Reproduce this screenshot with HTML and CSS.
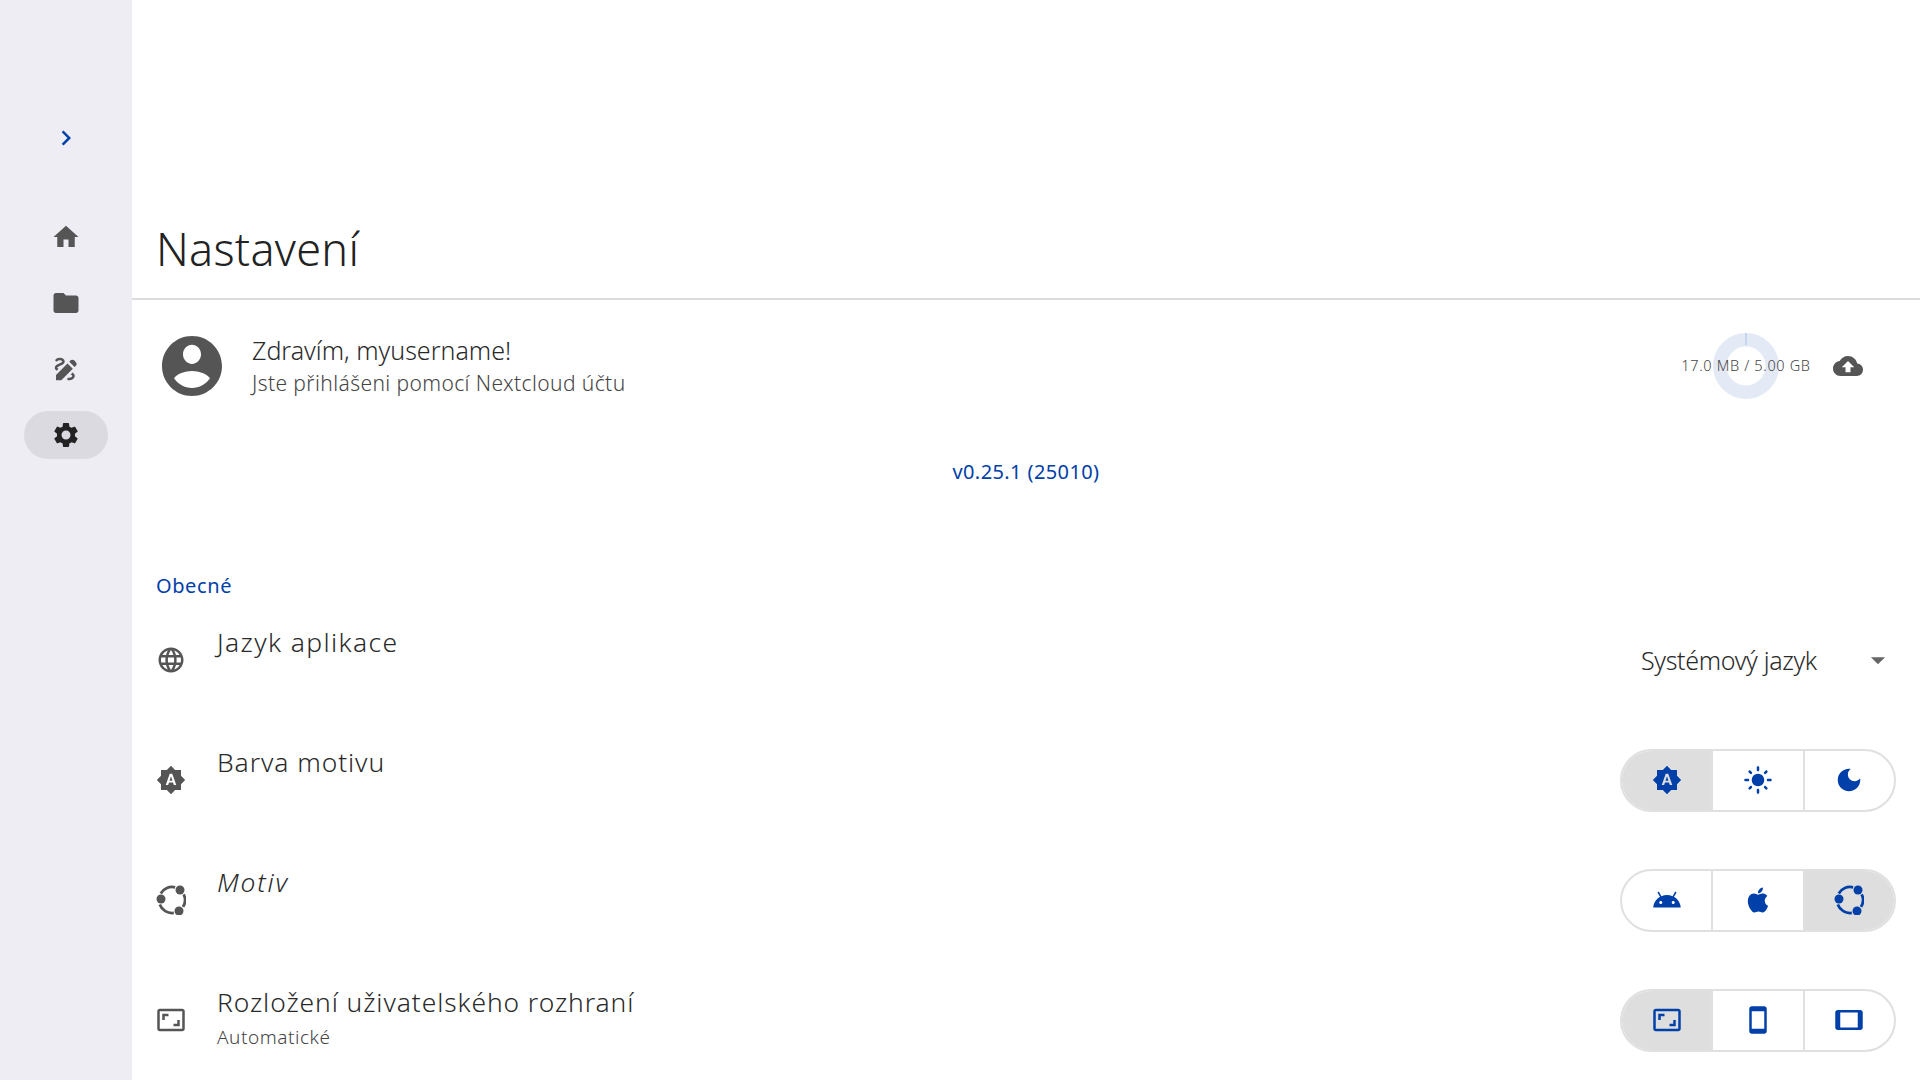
FILE: index.html
```html
<!DOCTYPE html>
<html lang="cs">
<head>
<meta charset="utf-8">
<title>Nastavení</title>
<link rel="stylesheet" href="styles.css">
</head>
<body>
<svg class="defs" aria-hidden="true">
  <symbol id="i-chevron" viewBox="0 0 24 24"><path d="M10 6L8.59 7.41 13.17 12l-4.58 4.59L10 18l6-6z"/></symbol>
  <symbol id="i-home" viewBox="0 0 24 24"><path d="M10 20v-6h4v6h5v-8h3L12 3 2 12h3v8z"/></symbol>
  <symbol id="i-folder" viewBox="0 0 24 24"><path d="M10 4H4c-1.1 0-1.99.9-1.99 2L2 18c0 1.1.9 2 2 2h16c1.1 0 2-.9 2-2V8c0-1.1-.9-2-2-2h-8l-2-2z"/></symbol>
  <symbol id="i-draw" viewBox="0 0 24 24"><path d="M18.85 10.39l1.06-1.06c.78-.78.78-2.05 0-2.83L18.5 5.09c-.78-.78-2.05-.78-2.83 0l-1.06 1.06 4.24 4.24zm-5.66-2.83L4 16.76V21h4.24l9.19-9.19-4.24-4.25zM19 17.5c0 2.19-2.54 3.5-5 3.5-.55 0-1-.45-1-1s.45-1 1-1c1.54 0 3-.73 3-1.5 0-.47-.48-.87-1.23-1.2l1.48-1.48c1.07.63 1.75 1.47 1.75 2.68zM4.58 13.35C3.61 12.79 3 12.06 3 11c0-1.8 1.89-2.63 3.56-3.36C7.59 7.18 9 6.56 9 6c0-.41-.78-1-2-1-1.26 0-1.8.61-1.83.64-.35.41-.98.46-1.4.12-.41-.34-.49-.95-.15-1.38C3.73 4.24 4.76 3 7 3s4 1.32 4 3c0 1.87-1.93 2.72-3.64 3.47C6.42 9.88 5 10.5 5 11c0 .31.43.6 1.07.86l-1.49 1.49z"/></symbol>
  <symbol id="i-settings" viewBox="0 0 24 24"><path d="M19.14 12.94c.04-.3.06-.61.06-.94 0-.32-.02-.64-.07-.94l2.03-1.58c.18-.14.23-.41.12-.61l-1.92-3.32c-.12-.22-.37-.29-.59-.22l-2.39.96c-.5-.38-1.03-.7-1.62-.94l-.36-2.54c-.04-.24-.24-.41-.48-.41h-3.84c-.24 0-.43.17-.47.41l-.36 2.54c-.59.24-1.13.57-1.62.94l-2.39-.96c-.22-.08-.47 0-.59.22L2.74 8.87c-.12.21-.08.47.12.61l2.03 1.58c-.05.3-.09.63-.09.94s.02.64.07.94l-2.03 1.58c-.18.14-.23.41-.12.61l1.92 3.32c.12.22.37.29.59.22l2.39-.96c.5.38 1.03.7 1.62.94l.36 2.54c.05.24.24.41.48.41h3.84c.24 0 .44-.17.47-.41l.36-2.54c.59-.24 1.13-.56 1.62-.94l2.39.96c.22.08.47 0 .59-.22l1.92-3.32c.12-.22.07-.47-.12-.61l-2.01-1.58zM12 15.6c-1.98 0-3.6-1.62-3.6-3.6s1.62-3.6 3.6-3.6 3.6 1.62 3.6 3.6-1.62 3.6-3.6 3.6z"/></symbol>
  <symbol id="i-account" viewBox="0 0 24 24"><path d="M12 2C6.48 2 2 6.48 2 12s4.48 10 10 10 10-4.48 10-10S17.52 2 12 2zm0 2.9c1.66 0 3 1.44 3 3.2s-1.34 3.2-3 3.2-3-1.44-3-3.2 1.34-3.2 3-3.2zm0 14.4c-2.5 0-4.71-1.28-6-3.22 1-1.4 3.6-2.38 6-2.38s5 .98 6 2.38c-1.29 1.94-3.5 3.22-6 3.22z"/></symbol>
  <symbol id="i-cloud" viewBox="0 0 24 24"><path d="M19.35 10.04C18.67 6.59 15.64 4 12 4 9.11 4 6.6 5.64 5.35 8.04 2.34 8.36 0 10.91 0 14c0 3.31 2.69 6 6 6h13c2.76 0 5-2.24 5-5 0-2.64-2.05-4.78-4.65-4.96zM14 13v4h-4v-4H7l5-5 5 5h-3z"/></symbol>
  <symbol id="i-language" viewBox="0 0 24 24"><path d="M11.99 2C6.47 2 2 6.48 2 12s4.47 10 9.99 10C17.52 22 22 17.52 22 12S17.52 2 11.99 2zm6.93 6h-2.95c-.32-1.25-.78-2.45-1.38-3.56 1.84.63 3.37 1.91 4.33 3.56zM12 4.04c.83 1.2 1.48 2.53 1.91 3.96h-3.82c.43-1.43 1.08-2.76 1.91-3.96zM4.26 14C4.1 13.36 4 12.69 4 12s.1-1.36.26-2h3.38c-.08.66-.14 1.32-.14 2 0 .68.06 1.34.14 2H4.26zm.82 2h2.95c.32 1.25.78 2.45 1.38 3.56-1.84-.63-3.37-1.9-4.33-3.56zm2.95-8H5.08c.96-1.66 2.49-2.93 4.33-3.56C8.81 5.55 8.35 6.75 8.03 8zM12 19.96c-.83-1.2-1.48-2.53-1.91-3.96h3.82c-.43 1.43-1.08 2.76-1.91 3.96zM14.34 14H9.66c-.09-.66-.16-1.32-.16-2 0-.68.07-1.35.16-2h4.68c.09.65.16 1.32.16 2 0 .68-.07 1.34-.16 2zm.25 5.56c.6-1.11 1.06-2.31 1.38-3.56h2.95c-.96 1.65-2.49 2.93-4.33 3.56zM16.36 14c.08-.66.14-1.32.14-2 0-.68-.06-1.34-.14-2h3.38c.16.64.26 1.31.26 2s-.1 1.36-.26 2h-3.38z"/></symbol>
  <symbol id="i-auto" viewBox="0 0 24 24"><path d="M10.85 12.65h2.3L12 9l-1.15 3.65zM20 8.69V4h-4.69L12 .69 8.69 4H4v4.69L.69 12 4 15.31V20h4.69L12 23.31 15.31 20H20v-4.69L23.31 12 20 8.69zM14.3 16l-.7-2h-3.2l-.7 2H7.8L11 7h2l3.2 9h-1.9z"/></symbol>
  <symbol id="i-sun" viewBox="0 0 24 24"><path d="M12 7c-2.76 0-5 2.24-5 5s2.24 5 5 5 5-2.24 5-5-2.24-5-5-5zM2 13h2c.55 0 1-.45 1-1s-.45-1-1-1H2c-.55 0-1 .45-1 1s.45 1 1 1zm18 0h2c.55 0 1-.45 1-1s-.45-1-1-1h-2c-.55 0-1 .45-1 1s.45 1 1 1zM11 2v2c0 .55.45 1 1 1s1-.45 1-1V2c0-.55-.45-1-1-1s-1 .45-1 1zm0 18v2c0 .55.45 1 1 1s1-.45 1-1v-2c0-.55-.45-1-1-1s-1 .45-1 1zM5.99 4.58c-.39-.39-1.03-.39-1.41 0-.39.39-.39 1.03 0 1.41l1.06 1.06c.39.39 1.03.39 1.41 0s.39-1.03 0-1.41L5.99 4.58zm12.37 12.37c-.39-.39-1.03-.39-1.41 0-.39.39-.39 1.03 0 1.41l1.06 1.06c.39.39 1.03.39 1.41 0 .39-.39.39-1.03 0-1.41l-1.06-1.06zm1.06-10.96c.39-.39.39-1.03 0-1.41-.39-.39-1.03-.39-1.41 0l-1.06 1.06c-.39.39-.39 1.03 0 1.41s1.03.39 1.41 0l1.06-1.06zM7.05 18.36c.39-.39.39-1.03 0-1.41-.39-.39-1.03-.39-1.41 0l-1.06 1.06c-.39.39-.39 1.03 0 1.41s1.03.39 1.41 0l1.06-1.06z"/></symbol>
  <symbol id="i-moon" viewBox="0 0 24 24"><path d="M12 3c-4.97 0-9 4.03-9 9s4.03 9 9 9 9-4.03 9-9c0-.46-.04-.92-.1-1.36-.98 1.37-2.58 2.26-4.4 2.26-2.98 0-5.4-2.42-5.4-5.4 0-1.81.89-3.42 2.26-4.4-.44-.06-.9-.1-1.36-.1z"/></symbol>
  <symbol id="i-android" viewBox="0 0 24 24"><path d="M17.6 9.48l1.84-3.18c.16-.31.04-.69-.26-.85-.29-.15-.65-.06-.83.22l-1.88 3.24c-2.86-1.21-6.08-1.21-8.94 0L5.65 5.67c-.19-.29-.58-.38-.87-.2-.28.18-.37.54-.22.83L6.4 9.48C3.3 11.25 1.28 14.44 1 18h22c-.28-3.56-2.3-6.75-5.4-8.52zM7 15.25c-.69 0-1.25-.56-1.25-1.25s.56-1.25 1.25-1.25 1.25.56 1.25 1.25-.56 1.25-1.25 1.25zm10 0c-.69 0-1.25-.56-1.25-1.25s.56-1.25 1.25-1.25 1.25.56 1.25 1.25-.56 1.25-1.25 1.25z"/></symbol>
  <symbol id="i-apple" viewBox="0 0 24 24"><path d="M18.71 19.5c-.83 1.24-1.71 2.45-3.05 2.47-1.34.03-1.77-.79-3.29-.79-1.53 0-2 .77-3.27.82-1.31.05-2.3-1.32-3.14-2.53C4.25 17 2.94 12.45 4.7 9.39c.87-1.52 2.43-2.48 4.12-2.51 1.28-.02 2.5.87 3.29.87.78 0 2.26-1.07 3.81-.91.65.03 2.47.26 3.64 1.98-.09.06-2.17 1.28-2.15 3.81.03 3.02 2.65 4.03 2.68 4.04-.03.07-.42 1.44-1.38 2.83M13 3.5c.73-.83 1.94-1.46 2.94-1.5.13 1.17-.34 2.35-1.04 3.19-.69.85-1.83 1.51-2.95 1.42-.15-1.15.41-2.35 1.05-3.11z"/></symbol>
  <symbol id="i-ubuntu" viewBox="-0.8 0 24 24"><circle cx="18.4" cy="4" r="3.6"/><circle cx="3.2" cy="11.2" r="3.6"/><circle cx="17.6" cy="20.8" r="3.6"/><path class="arc" d="M21.35 7.44A10.4 10.4 0 0 1 20.82 17.51M13.45 22.3A10.4 10.4 0 0 1 2.23 15.56M3 6.8A10.4 10.4 0 0 1 14.5 1.9"/></symbol>
  <symbol id="i-aspect" viewBox="0 0 24 24"><path d="M19 12h-2v3h-3v2h5v-5zM7 9h3V7H5v5h2V9zm14-6H3c-1.1 0-2 .9-2 2v14c0 1.1.9 2 2 2h18c1.1 0 2-.9 2-2V5c0-1.1-.9-2-2-2zm0 16.01H3V4.99h18v14.02z"/></symbol>
  <symbol id="i-phone" viewBox="0 0 24 24"><path d="M17 1.01L7 1c-1.1 0-2 .9-2 2v18c0 1.1.9 2 2 2h10c1.1 0 2-.9 2-2V3c0-1.1-.9-1.99-2-1.99zM17 19H7V5h10v14z"/></symbol>
  <symbol id="i-tablet" viewBox="0 0 24 24"><path d="M21 4H3c-1.1 0-2 .9-2 2v12c0 1.1.9 2 2 2h18c1.1 0 1.99-.9 1.99-2L23 6c0-1.1-.9-2-2-2zm-2 14H5V6h14v12z"/></symbol>
  <symbol id="i-drop" viewBox="0 0 24 24"><path d="M7 10l5 5 5-5z"/></symbol>
</svg>

<div class="app">
  <nav class="rail">
    <button class="rail-toggle"><svg class="icon accent"><use href="#i-chevron"/></svg></button>
    <ul class="rail-list">
      <li class="rail-item"><svg class="icon"><use href="#i-home"/></svg></li>
      <li class="rail-item"><svg class="icon"><use href="#i-folder"/></svg></li>
      <li class="rail-item"><svg class="icon"><use href="#i-draw"/></svg></li>
      <li class="rail-item is-active"><svg class="icon"><use href="#i-settings"/></svg></li>
    </ul>
  </nav>

  <main class="main">
    <header class="topbar"><h1 class="page-title">Nastavení</h1></header>

    <section class="account">
      <svg class="avatar"><use href="#i-account"/></svg>
      <div class="account-text">
        <div class="account-name">Zdravím, myusername!</div>
        <div class="account-sub">Jste přihlášeni pomocí Nextcloud účtu</div>
      </div>
      <div class="storage">
        <div class="storage-meter">
          <svg class="donut" viewBox="0 0 66 66">
            <circle class="donut-track" cx="33" cy="33" r="26.25"/>
            <line class="donut-value" x1="33" y1="0" x2="33" y2="12"/>
          </svg>
          <span class="storage-label">17.0 MB / 5.00 GB</span>
        </div>
        <svg class="icon"><use href="#i-cloud"/></svg>
      </div>
    </section>

    <div class="version">v0.25.1 (25010)</div>

    <h2 class="section-title">Obecné</h2>

    <section class="row">
      <svg class="icon"><use href="#i-language"/></svg>
      <div class="row-text"><div class="row-title is-wide">Jazyk aplikace</div></div>
      <div class="select"><span class="select-value">Systémový jazyk</span><svg class="select-arrow"><use href="#i-drop"/></svg></div>
    </section>

    <section class="row">
      <svg class="icon"><use href="#i-auto"/></svg>
      <div class="row-text"><div class="row-title">Barva motivu</div></div>
      <div class="segments">
        <div class="segment is-on"><svg class="icon accent"><use href="#i-auto"/></svg></div>
        <div class="segment"><svg class="icon accent"><use href="#i-sun"/></svg></div>
        <div class="segment"><svg class="icon accent"><use href="#i-moon"/></svg></div>
      </div>
    </section>

    <section class="row">
      <svg class="icon"><use href="#i-ubuntu"/></svg>
      <div class="row-text"><div class="row-title is-italic">Motiv</div></div>
      <div class="segments">
        <div class="segment"><svg class="icon accent"><use href="#i-android"/></svg></div>
        <div class="segment"><svg class="icon accent"><use href="#i-apple"/></svg></div>
        <div class="segment is-on"><svg class="icon accent"><use href="#i-ubuntu"/></svg></div>
      </div>
    </section>

    <section class="row">
      <svg class="icon"><use href="#i-aspect"/></svg>
      <div class="row-text">
        <div class="row-title">Rozložení uživatelského rozhraní</div>
        <div class="row-sub">Automatické</div>
      </div>
      <div class="segments">
        <div class="segment is-on"><svg class="icon accent"><use href="#i-aspect"/></svg></div>
        <div class="segment"><svg class="icon accent"><use href="#i-phone"/></svg></div>
        <div class="segment"><svg class="icon accent"><use href="#i-tablet"/></svg></div>
      </div>
    </section>
  </main>
</div>
</body>
</html>
```

FILE: styles.css
```css
* { box-sizing: border-box; }

html, body {
  margin: 0;
  height: 100%;
  overflow: hidden;
  background: #fff;
  color: #2a2a2a;
  font-family: "Noto Sans", "Open Sans", sans-serif;
  font-weight: 300;
}

.defs { display: none; }

.app {
  display: flex;
  width: 1920px;
  height: 1080px;
}

.icon {
  display: block;
  flex: none;
  width: 30px;
  height: 30px;
  color: #555;
  fill: #555;
  overflow: visible;
}
.icon.accent { color: #0040a8; fill: #0040a8; }
.arc { fill: none; stroke: currentColor; stroke-width: 2.2; }

/* navigation rail */
.rail {
  flex: none;
  width: 132px;
  padding-top: 114px;
  background: #eeedf4;
  display: flex;
  flex-direction: column;
  align-items: center;
}
.rail-toggle {
  width: 48px;
  height: 48px;
  padding: 0;
  border: 0;
  background: none;
  display: flex;
  align-items: center;
  justify-content: center;
}
.rail-list {
  list-style: none;
  margin: 51px 0 0;
  padding: 0;
  display: flex;
  flex-direction: column;
  gap: 18px;
}
.rail-item {
  width: 84px;
  height: 48px;
  border-radius: 24px;
  display: flex;
  align-items: center;
  justify-content: center;
}
.rail-item.is-active { background: #dbdae0; }
.rail-item.is-active .icon { fill: #222; }

/* main column */
.main {
  flex: 1;
  min-width: 0;
  display: flex;
  flex-direction: column;
}
.topbar {
  height: 300px;
  padding: 0 24px 10px;
  border-bottom: 2px solid #dcdcdc;
  display: flex;
  align-items: flex-end;
}
.page-title {
  margin: 0;
  font-size: 45px;
  line-height: 78px;
  font-weight: 300;
  letter-spacing: .27px;
  color: #222;
}

/* account */
.account {
  height: 132px;
  padding: 0 57px 0 24px;
  display: flex;
  align-items: center;
  gap: 24px;
}
.avatar {
  flex: none;
  width: 72px;
  height: 72px;
  fill: #555;
}
.account-text { flex: 1; }
.account-name {
  font-size: 25px;
  line-height: 34px;
}
.account-sub {
  font-size: 21px;
  line-height: 32px;
  letter-spacing: .4px;
  color: #444;
}
.storage {
  display: flex;
  align-items: center;
  gap: 22px;
}
.storage-meter {
  position: relative;
  width: 130px;
  height: 66px;
  display: flex;
  align-items: center;
  justify-content: center;
}
.donut {
  position: absolute;
  top: 0;
  left: 32px;
  width: 66px;
  height: 66px;
}
.donut-track { fill: none; stroke: #e3eaf6; stroke-width: 13.5; }
.donut-value { stroke: #a9c1e6; stroke-width: 1; }
.storage-label {
  position: relative;
  top: -1px;
  font-size: 14.5px;
  font-weight: 300;
  letter-spacing: .65px;
  white-space: nowrap;
  color: #444;
}

.version {
  height: 80px;
  text-align: center;
  font-size: 20px;
  line-height: 80px;
  font-weight: 400;
  letter-spacing: .4px;
  color: #0040a8;
}

.section-title {
  margin: 0;
  height: 88px;
  padding: 59px 24px 0;
  font-size: 20px;
  line-height: 30px;
  font-weight: 400;
  letter-spacing: .6px;
  color: #0040a8;
}

/* settings rows */
.row {
  flex: none;
  height: 120px;
  padding: 0 24px;
  display: flex;
  align-items: center;
  gap: 31px;
}
.row-text {
  flex: 1;
  align-self: flex-start;
  padding-top: 23px;
}
.row-title {
  font-size: 26.4px;
  line-height: 38px;
  letter-spacing: .92px;
}
.row-title.is-wide { letter-spacing: 1.4px; }
.row-title.is-italic { font-style: italic; letter-spacing: 1.8px; }
.row-sub {
  font-size: 19px;
  line-height: 33px;
  letter-spacing: .55px;
  color: #444;
}

.select {
  width: 276px;
  padding-left: 21px;
  display: flex;
  align-items: center;
  justify-content: space-between;
}
.select-value { font-size: 25px; line-height: 34px; letter-spacing: -.33px; }
.select-arrow {
  flex: none;
  width: 34px;
  height: 34px;
  fill: #666;
  margin-right: 1px;
}

.segments {
  flex: none;
  width: 276px;
  height: 63px;
  border: 2px solid #e0e0e0;
  border-radius: 32px;
  overflow: hidden;
  display: flex;
}
.segment {
  flex: 1;
  display: flex;
  align-items: center;
  justify-content: center;
  border-left: 2px solid #e0e0e0;
}
.segment:first-child { border-left: 0; }
.segment.is-on { background: #dedede; }
```
